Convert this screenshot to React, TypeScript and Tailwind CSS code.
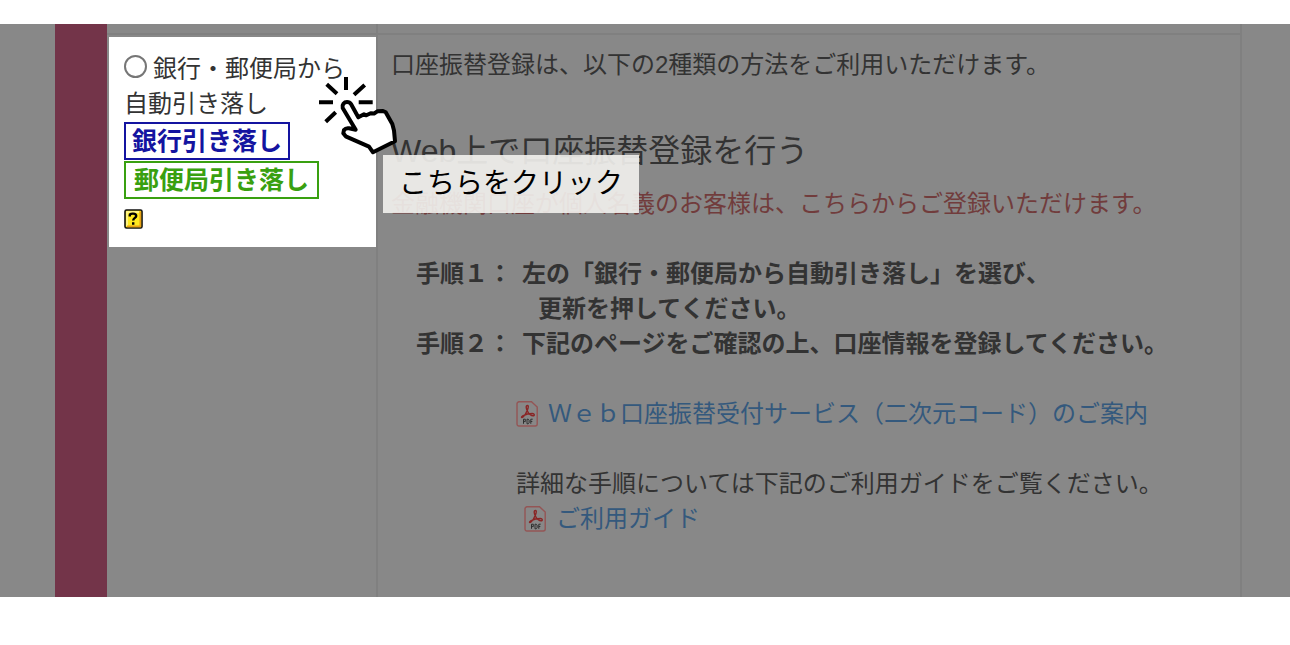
import type { ReactNode } from 'react';

function ClickHand() {
  return (
    <svg
      viewBox="0 0 88 80"
      className="absolute left-[208px] top-10 z-20 h-20 w-[88px]"
      fill="none"
      stroke="#000"
      strokeWidth="4"
      aria-hidden="true"
    >
      <path
        d="M27.700 33c-1-3.500 1.500-6 4.300-6 1.800 0 3.200.7 4 2l7.300 13.300 5.700-3 2.300 1 4.400-2 3.300.3 3.300-2.300 5.700-.3 2.700 1.300L77.300 49l1.700 6.500 1 10.800-22 11-4-5.600-23.300-10.400-2.400-3 .7-3.300c1.200-1.600 3-2 5-1.700l6.700 1.400z"
        fill="#fff"
        strokeLinejoin="round"
      />
      <path d="M31 2v13M4 27.300h14M43.700 27.300h14M11.700 9.300l10.300 9.400M49.700 10L39 19.700M10.700 46.700l10-9.400" />
    </svg>
  );
}

function PdfIcon() {
  return (
    <svg viewBox="0 0 22 26" className="h-[26px] w-[22px] shrink-0" fill="none" aria-hidden="true">
      <path d="M3 .8h12.500L21.200 6v17a2 2 0 0 1-2 2H3a2 2 0 0 1-2-2V2.800a2 2 0 0 1 2-2z" stroke="#945555" strokeWidth="1.400" />
      <path
        d="M11.500 4.500c-2.200 0-1.200 3.800.2 6.200 1.300 2.300 3.500 4.100 5.400 4.100 1.800 0 1.600-2.300-.8-2.300-3.300 0-7 1.100-9.600 2.400-2 1.200-1.300 2.300.1 1.300 1.600-1.300 3.700-4.600 4.700-7.400.9-2.400 1.200-4.300 0-4.300z"
        stroke="#8a2626"
        strokeWidth="1.400"
      />
      <path d="M7.500 22.800v-4.600h1.800v2.400H7.500M11 18.200v4.600h1.200l.9-1v-2.600l-.9-1zM14.800 22.800v-4.600h1.900M14.800 20.500h1.500" stroke="#303030" strokeWidth="1" />
    </svg>
  );
}

function HelpIcon() {
  return (
    <svg viewBox="0 0 19 20" className="h-5 w-[19px]" aria-hidden="true">
      <rect x="1" y="1" width="17" height="18" rx="1.500" fill="#ffe920" stroke="#111" strokeWidth="1.600" />
      <path d="M3 17V3h12" fill="none" stroke="#fff7a0" strokeWidth="1.500" />
      <path d="M16.300 2.500v14.800H3" fill="none" stroke="#e8a015" strokeWidth="1.700" />
      <path d="M5.800 7.500V6c.4-2 6.400-2 6.400.9 0 2-3 2-3 4.600M9.200 13.300v2.500" fill="none" stroke="#000" strokeWidth="2.400" />
    </svg>
  );
}

function PdfLink({ children }: { children: ReactNode }) {
  return (
    <a href="#" className="flex items-center gap-2.5 text-[#34597d]">
      <PdfIcon />
      {children}
    </a>
  );
}

function Step({ label, children }: { label: string; children: ReactNode }) {
  return (
    <li className="flex">
      <span className="w-[106px] shrink-0">{label}</span>
      <div>{children}</div>
    </li>
  );
}

export default function App() {
  return (
    <main className="py-6 font-['Liberation_Sans','Noto_Sans_CJK_JP',sans-serif] text-2xl leading-[35px] text-[#333333]">
      <div className="bg-[#888888] pl-[55px] pr-12">
        <div className="flex border-r-2 border-[#808080]">
          <div className="w-[52px] shrink-0 bg-[#733449]" />
          <div className="min-w-0 flex-1">
            <div className="flex h-[11px] border-b-2 border-[#808080]">
              <div className="w-[269px] shrink-0" />
              <div className="border-l-2 border-[#808080]" />
            </div>
            <div className="flex">
              <div className="relative w-[269px] shrink-0 pl-0.5 pt-0.5">
                <div className="bg-white pb-[18px] pl-[15px] pt-3.5">
                  <label>
                    <input
                      type="radio"
                      name="payment"
                      className="mr-1.5 size-[23px] appearance-none rounded-full border-2 border-[#767676] bg-white align-[-1px]"
                    />
                    銀行・郵便局から
                    <br />
                    自動引き落し
                  </label>
                  <div className="flex flex-col items-start gap-px pt-px text-[25px] font-bold">
                    <button className="h-[38px] border-2 border-[#1414a0] px-1.5 leading-[34px] text-[#1414a0]">
                      銀行引き落し
                    </button>
                    <button className="h-[38px] border-2 border-[#39a010] px-2 leading-[34px] text-[#39a010]">
                      郵便局引き落し
                    </button>
                  </div>
                  <button aria-label="ヘルプ" className="mt-2.5 block">
                    <HelpIcon />
                  </button>
                </div>
                <ClickHand />
                <div className="absolute left-[276px] top-[120px] z-10 whitespace-nowrap bg-[#f3f2ee]/90 px-4 py-[11px] text-[28px] leading-9 text-black">
                  こちらをクリック
                </div>
              </div>
              <div className="min-w-0 flex-1 border-l-2 border-[#808080] pb-[61px] pl-[13px] pt-3">
                <p>口座振替登録は、以下の2種類の方法をご利用いただけます。</p>
                <h2 className="mt-12 text-[32px] leading-[42px]">Web上で口座振替登録を行う</h2>
                <p className="mt-3.5 text-[#713c3c]">金融機関口座が個人名義のお客様は、こちらからご登録いただけます。</p>
                <ol className="mt-[35px] pl-[25px] font-bold">
                  <Step label="手順１：">
                    左の「銀行・郵便局から自動引き落し」を選び、
                    <p className="pl-4">更新を押してください。</p>
                  </Step>
                  <Step label="手順２：">下記のページをご確認の上、口座情報を登録してください。</Step>
                </ol>
                <div className="pl-[125px] pt-[35px]">
                  <PdfLink>Ｗｅｂ口座振替受付サービス（二次元コード）のご案内</PdfLink>
                  <p className="mt-[35px]">詳細な手順については下記のご利用ガイドをご覧ください。</p>
                  <div className="pl-2">
                    <PdfLink>ご利用ガイド</PdfLink>
                  </div>
                </div>
              </div>
            </div>
          </div>
        </div>
      </div>
    </main>
  );
}
